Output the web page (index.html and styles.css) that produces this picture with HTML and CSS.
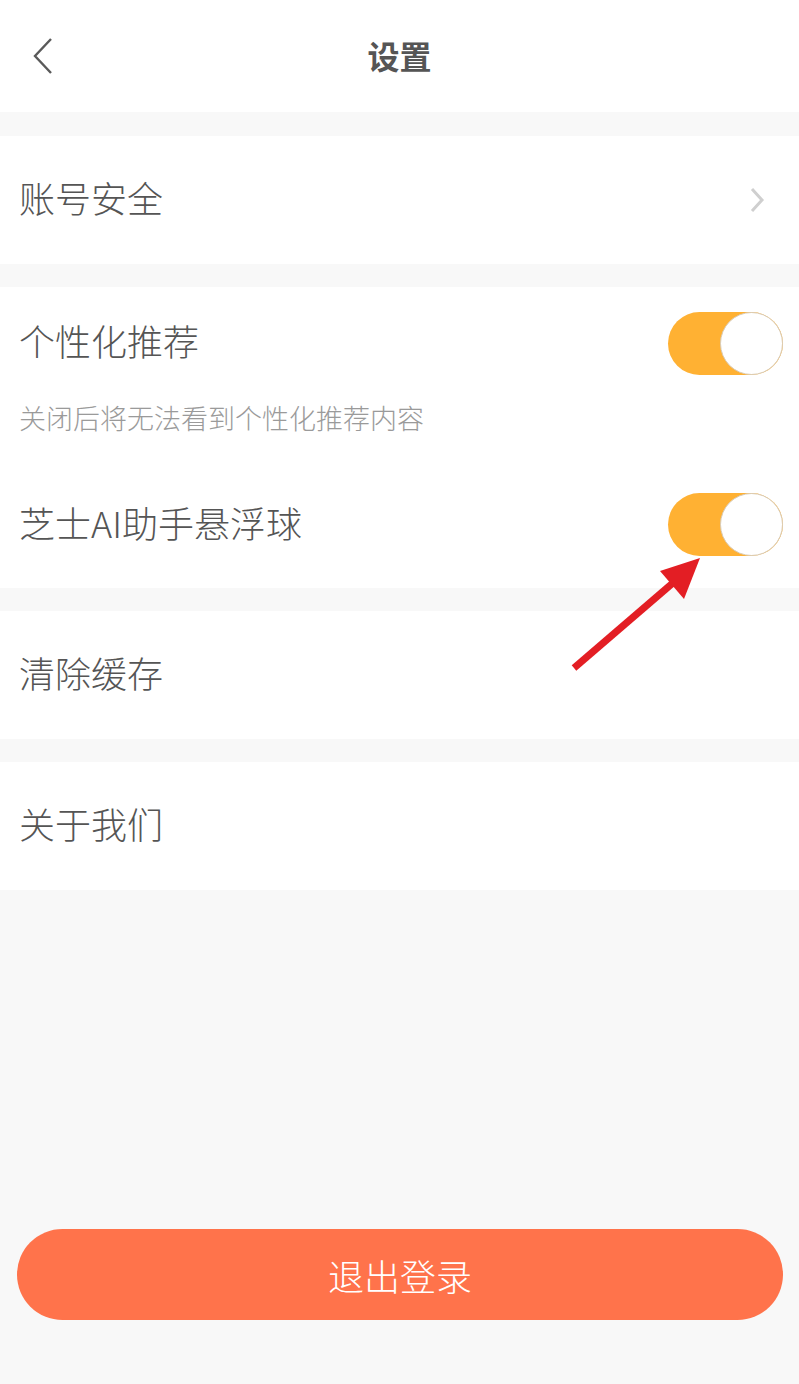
FILE: index.html
```html
<!DOCTYPE html>
<html lang="zh-CN">
<head>
  <meta charset="UTF-8">
  <meta name="viewport" content="width=device-width, initial-scale=1.0">
  <title>设置</title>
  <link rel="stylesheet" href="styles.css">
</head>
<body>

  <div class="page">
    <header class="nav-bar">
      <span class="back">
        <svg width="22" height="36" viewBox="0 0 22 36"><path d="M19 1 L3 18 L19 35" fill="none" stroke="#5a5a5a" stroke-width="2.4"/></svg>
      </span>
      <h1>设置</h1>
    </header>

    <section class="card">
      <div class="row">
        <span class="label">账号安全</span>
        <svg class="chevron" width="16" height="26" viewBox="0 0 16 26"><path d="M3 2 L13 13 L3 24" fill="none" stroke="#cfcfcf" stroke-width="3"/></svg>
      </div>
    </section>

    <section class="card">
      <div class="row row-toggle">
        <span class="label">个性化推荐</span>
        <span class="switch on"><span class="knob"></span></span>
      </div>
      <p class="hint">关闭后将无法看到个性化推荐内容</p>
      <div class="row row-float">
        <span class="label">芝士AI助手悬浮球</span>
        <span class="switch on"><span class="knob"></span></span>
      </div>
    </section>

    <section class="card">
      <div class="row">
        <span class="label">清除缓存</span>
      </div>
    </section>

    <section class="card">
      <div class="row">
        <span class="label">关于我们</span>
      </div>
    </section>

    <div class="spacer"></div>

    <button class="logout" type="button">退出登录</button>
  </div>

  <!-- annotation arrow drawn over the screenshot -->
  <svg class="annot" width="799" height="1384" viewBox="0 0 799 1384">
    <line x1="574" y1="668" x2="674" y2="582" stroke="#e31e24" stroke-width="7"/>
    <polygon points="700,558 660,571 684,599" fill="#e31e24"/>
  </svg>

</body>
</html>
```

FILE: styles.css
```css
* {
  box-sizing: border-box;
}
body {
  margin: 0;
  position: relative;
  background-color: #f8f8f8;
  font-family: "Noto Sans CJK SC", "Noto Sans", sans-serif;
  color: #555;
}
.page {
  display: flex;
  flex-direction: column;
  height: 1384px;
}
.nav-bar {
  height: 112px;
  background-color: #fff;
  display: flex;
  align-items: center;
  justify-content: center;
  position: relative;
  margin-bottom: 24px;
}
.nav-bar h1 {
  margin: 0 0 3px;
  font-size: 32px;
  font-weight: bold;
  color: #555;
}
.back {
  position: absolute;
  left: 32px;
  top: 38px;
  display: flex;
}
.card {
  background-color: #fff;
  margin-bottom: 23px;
}
.row {
  height: 128px;
  padding: 0 16px 0 19px;
  display: flex;
  align-items: center;
  justify-content: space-between;
}
.row-toggle {
  height: 112px;
}
.row-float {
  height: 127px;
}
.label {
  margin-bottom: 6px;
  font-size: 36px;
  font-weight: 300;
  color: #555;
}
.chevron {
  margin-right: 18px;
}
.hint {
  margin: 0;
  padding: 0 19px 24px;
  line-height: 38px;
  font-size: 27px;
  font-weight: 300;
  color: #9a9a9a;
}
.switch {
  width: 115px;
  height: 63px;
  border-radius: 32px;
  background-color: #ffb133;
  display: flex;
  justify-content: flex-end;
}
.knob {
  width: 63px;
  height: 63px;
  border-radius: 50%;
  background-color: #fff;
  border: 1px solid #d9cbb5;
}
.spacer {
  flex: 1;
}
.logout {
  margin: 0 16px 64px 17px;
  height: 91px;
  border: none;
  border-radius: 46px;
  background-color: #ff734b;
  color: #fff;
  font-family: "Noto Sans CJK SC", sans-serif;
  font-size: 36px;
  font-weight: 300;
}
.annot {
  position: absolute;
  left: 0;
  top: 0;
  pointer-events: none;
}
```
